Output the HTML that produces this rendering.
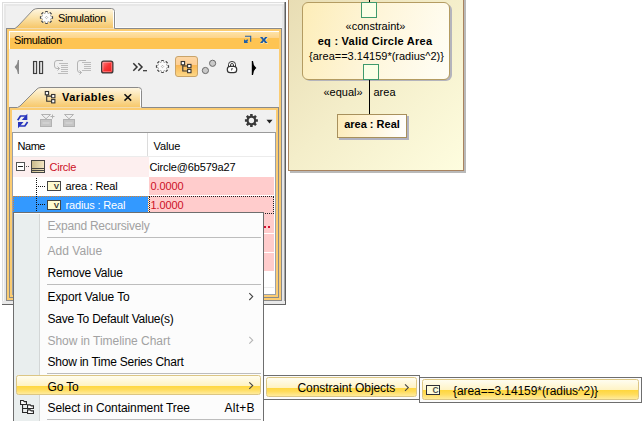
<!DOCTYPE html>
<html lang="en">
<head>
<meta charset="utf-8">
<title>Simulation</title>
<style>
html,body{margin:0;padding:0;background:#fff;}
body{width:644px;height:421px;position:relative;overflow:hidden;font-family:"Liberation Sans",sans-serif;font-size:11px;color:#000;}
.a{position:absolute;}
.t{position:absolute;white-space:nowrap;line-height:14px;height:14px;}
.m{position:absolute;white-space:nowrap;line-height:16px;height:16px;font-size:12px;letter-spacing:-0.3px;color:#000;}
.dis{color:#a2a2a2;}
.sep{position:absolute;height:1px;background:#bdbdbd;left:47px;width:214px;}
.hl{position:absolute;border:1px solid #dcc684;border-radius:2.5px;box-sizing:border-box;
 background:linear-gradient(#fffdf0 0%,#fff3c4 53%,#ffd63c 53%,#ffdc5c 75%,#ffeb9c 100%);}
svg{position:absolute;overflow:visible;}
</style>
</head>
<body>

<!-- ================= application background ================= -->
<div class="a" style="left:2px;top:2px;width:284px;height:303px;background:#f0f0f0;"></div>
<div class="a" style="left:2px;top:2px;width:284px;height:1px;background:#dedede;"></div>
<div class="a" style="left:2px;top:3px;width:284px;height:1px;background:#fafafa;"></div>
<div class="a" style="left:4px;top:4px;width:281px;height:2px;background:#e7e7e7;"></div>
<div class="a" style="left:2px;top:2px;width:1px;height:303px;background:#dedede;"></div>
<div class="a" style="left:3px;top:3px;width:1px;height:301px;background:#fafafa;"></div>
<div class="a" style="left:4px;top:4px;width:2px;height:300px;background:#e7e7e7;"></div>
<div class="a" style="left:282px;top:4px;width:2px;height:300px;background:#e6e6e6;"></div>
<div class="a" style="left:284px;top:2px;width:1px;height:302px;background:#a4a4a4;"></div>
<div class="a" style="left:285px;top:2px;width:1px;height:303px;background:#5e5e5e;"></div>
<div class="a" style="left:2px;top:301px;width:283px;height:3px;background:#e9e9e9;"></div>
<div class="a" style="left:2px;top:304px;width:284px;height:1px;background:#666;"></div>

<!-- ================= Simulation tab ================= -->
<svg style="left:0;top:0;" width="130" height="32" viewBox="0 0 130 32">
 <defs>
  <linearGradient id="tabg" x1="0" y1="0" x2="0" y2="1">
   <stop offset="0" stop-color="#fef6e2"/><stop offset="0.45" stop-color="#fbe3ab"/><stop offset="1" stop-color="#f6c566"/>
  </linearGradient>
 </defs>
 <path d="M14.5 28.5 L18 26 L33 10 Q35 8.5 38 8.5 L111 8.5 Q113.5 8.5 113.5 11 L113.5 28.5 Z" fill="url(#tabg)"/>
 <path d="M7 28.5 L15 28.5 L18 26 L33 10 Q35 8.5 38 8.5 L111.5 8.5 Q114.5 8.5 114.5 11.5 L114.5 28.5 L282 28.5" fill="none" stroke="#8a8a8a" stroke-width="1"/>
 <path d="M113.5 10.5 L113.5 27.5" stroke="#ffffff" stroke-width="1" fill="none"/>
 <path d="M115.5 11 L115.5 27.5 L130 27.5" stroke="#fbfbfb" stroke-width="1" fill="none"/>
 <!-- gear -->
 <g transform="translate(46.5,17.5)">
  <path d="M-1.01 -4.38 L-1.06 -6.01 L1.06 -6.01 L1.01 -4.38 L2.38 -3.82 L3.50 -5.00 L5.00 -3.50 L3.82 -2.38 L4.38 -1.01 L6.01 -1.06 L6.01 1.06 L4.38 1.01 L3.82 2.38 L5.00 3.50 L3.50 5.00 L2.38 3.82 L1.01 4.38 L1.06 6.01 L-1.06 6.01 L-1.01 4.38 L-2.38 3.82 L-3.50 5.00 L-5.00 3.50 L-3.82 2.38 L-4.38 1.01 L-6.01 1.06 L-6.01 -1.06 L-4.38 -1.01 L-3.82 -2.38 L-5.00 -3.50 L-3.50 -5.00 L-2.38 -3.82 Z" fill="#fdfdfd" stroke="#9a9a9a" stroke-width="0.7"/>
  <path d="M-1.16 -5.99 L1.16 -5.99 M3.41 -5.06 L5.06 -3.41 M5.99 -1.16 L5.99 1.16 M5.06 3.41 L3.41 5.06 M1.16 5.99 L-1.16 5.99 M-3.41 5.06 L-5.06 3.41 M-5.99 1.16 L-5.99 -1.16 M-5.06 -3.41 L-3.41 -5.06" fill="none" stroke="#474747" stroke-width="1.2"/>
  <path d="M-1.2 0 L0 -1.2 L1.2 0 L0 1.2 Z" fill="#fff" stroke="#8a8a8a" stroke-width="0.6"/>
 </g>
</svg>
<div class="a" style="left:115px;top:28px;width:167px;height:1px;background:#8a8a8a;"></div>
<div class="a" style="left:115px;top:27px;width:167px;height:1px;background:#fbfbfb;"></div>
<div class="t" style="left:58px;top:11px;letter-spacing:-0.36px;">Simulation</div>

<!-- ================= outer panel ================= -->
<div class="a" style="left:6px;top:28px;width:1px;height:273px;background:#8a8a8a;"></div>
<div class="a" style="left:281px;top:28px;width:1px;height:273px;background:#8a8a8a;"></div>
<div class="a" style="left:6px;top:300px;width:276px;height:1px;background:#8a8a8a;"></div>
<div class="a" style="left:7px;top:29px;width:274px;height:271px;box-sizing:border-box;border:2px solid #fbcc72;"></div>
<!-- title bar -->
<div class="a" style="left:9px;top:31px;width:270px;height:18px;background:#fff;"></div>
<div class="a" style="left:10px;top:32px;width:269px;height:17px;background:linear-gradient(#fee3a6 0px,#fdd48a 6px,#fec453 6px,#fec453 17px);"></div>
<div class="t" style="left:14px;top:33px;letter-spacing:-0.36px;">Simulation</div>
<!-- title icons -->
<svg style="left:243px;top:34px;" width="28" height="11" viewBox="243 34 28 11">
 <path d="M245 36.2 L250.7 36.2 L250.7 41.8" fill="none" stroke="#2160a8" stroke-width="1.1"/>
 <path d="M244 39.2 L244 43 L248 43 L247.2 41.6 L248.2 40 L247.2 39.2 L245.8 40.4 Z" fill="#2160a8"/>
 <path d="M260 37 L262.5 37 L263.8 38.7 L265.1 37 L267.6 37 L265.1 40 L267.6 43 L265.1 43 L263.8 41.3 L262.5 43 L260 43 L262.5 40 Z" fill="#fff3d4" transform="translate(0.6,0.4)"/>
 <path d="M260 37 L262.5 37 L263.8 38.7 L265.1 37 L267.6 37 L265.1 40 L267.6 43 L265.1 43 L263.8 41.3 L262.5 43 L260 43 L262.5 40 Z" fill="#1c5aa2"/>
</svg>

<!-- ================= main toolbar ================= -->
<svg style="left:0;top:54px;" width="282" height="30" viewBox="0 54 282 30">
 <defs>
  <linearGradient id="pg" x1="0" y1="0" x2="1" y2="0"><stop offset="0" stop-color="#b9b9b9"/><stop offset="1" stop-color="#f4f4f4"/></linearGradient>
  <linearGradient id="rg" x1="0" y1="0" x2="1" y2="1"><stop offset="0" stop-color="#ff8585"/><stop offset="0.5" stop-color="#f73535"/><stop offset="1" stop-color="#ee1818"/></linearGradient>
  <linearGradient id="bg1" x1="0" y1="0" x2="0" y2="1"><stop offset="0" stop-color="#fdd7a6"/><stop offset="0.42" stop-color="#fdcf95"/><stop offset="0.43" stop-color="#f9b653"/><stop offset="1" stop-color="#fdd989"/></linearGradient>
 </defs>
 <!-- left arrow -->
 <path d="M14.6 67 Q17.6 64.5 17.9 60 L19 60 L19 74 L17.9 74 Q17.6 69.5 14.6 67 Z" fill="#8a8a8a"/>
 <!-- pause -->
 <rect x="33.5" y="61.5" width="3.1" height="12" fill="url(#pg)" stroke="#3c3c3c" stroke-width="1.1"/>
 <rect x="39.5" y="61.5" width="3.1" height="12" fill="url(#pg)" stroke="#3c3c3c" stroke-width="1.1"/>
 <!-- step into (disabled) -->
 <g stroke="#b4b4b4" stroke-width="1" fill="none">
  <path d="M63 60.5 L57 60.5 Q54.5 60.5 54.5 63 L54.5 66 Q54.5 68.5 57 68.5 L59.5 68.5 M57.5 66.5 L59.5 68.5 L57.5 70.5"/>
  <path d="M59 63.5 L68 63.5 M61 65.5 L68 65.5 M61 67.5 L68 67.5 M61 69.5 L68 69.5 M61 71.5 L68 71.5 M58 73.5 L68 73.5" stroke="#bcbcbc"/>
 </g>
 <!-- step over (disabled) -->
 <g stroke="#b4b4b4" stroke-width="1" fill="none">
  <path d="M86 60.5 L80 60.5 Q77.5 60.5 77.5 63 L77.5 70 Q77.5 72.5 80 72.5 L81.5 72.5 M79.5 70.5 L81.5 72.5 L79.5 74.5"/>
  <path d="M82 62.5 L91 62.5 M84 64.5 L91 64.5 M84 66.5 L91 66.5 M84 68.5 L91 68.5 M82 70.5 L91 70.5" stroke="#bcbcbc"/>
 </g>
 <!-- stop -->
 <rect x="101.6" y="61.1" width="11.3" height="11.8" rx="2" fill="url(#rg)" stroke="#3a3a3a" stroke-width="1.2"/>
 <rect x="102.9" y="62.4" width="8.7" height="9.2" rx="1" fill="none" stroke="#ffffff" stroke-opacity="0.33" stroke-width="1"/>
 <!-- >>_ -->
 <path d="M133.3 63.3 L137 67 L133.3 70.7 M138.3 63.3 L142 67 L138.3 70.7" fill="none" stroke="#333" stroke-width="1.5"/>
 <path d="M143 70.7 L147 70.7" stroke="#333" stroke-width="1.2"/>
 <!-- dotted gear -->
 <g transform="translate(162.5,66.5)">
  <path d="M-1.01 -4.38 L-1.06 -6.01 L1.06 -6.01 L1.01 -4.38 L2.38 -3.82 L3.50 -5.00 L5.00 -3.50 L3.82 -2.38 L4.38 -1.01 L6.01 -1.06 L6.01 1.06 L4.38 1.01 L3.82 2.38 L5.00 3.50 L3.50 5.00 L2.38 3.82 L1.01 4.38 L1.06 6.01 L-1.06 6.01 L-1.01 4.38 L-2.38 3.82 L-3.50 5.00 L-5.00 3.50 L-3.82 2.38 L-4.38 1.01 L-6.01 1.06 L-6.01 -1.06 L-4.38 -1.01 L-3.82 -2.38 L-5.00 -3.50 L-3.50 -5.00 L-2.38 -3.82 Z" fill="#fdfdfd" stroke="#9a9a9a" stroke-width="0.7"/>
  <path d="M-1.16 -5.99 L1.16 -5.99 M3.41 -5.06 L5.06 -3.41 M5.99 -1.16 L5.99 1.16 M5.06 3.41 L3.41 5.06 M1.16 5.99 L-1.16 5.99 M-3.41 5.06 L-5.06 3.41 M-5.99 1.16 L-5.99 -1.16 M-5.06 -3.41 L-3.41 -5.06" fill="none" stroke="#474747" stroke-width="1.2"/>
  <path d="M-1.2 0 L0 -1.2 L1.2 0 L0 1.2 Z" fill="#fff" stroke="#8a8a8a" stroke-width="0.6"/>
 </g>
 <!-- selected button -->
 <rect x="175.5" y="56.5" width="22" height="20" rx="2.5" fill="url(#bg1)" stroke="#c9a46a" stroke-width="1"/>
 <g fill="#fff" stroke="#333" stroke-width="1.1">
  <path d="M182.8 65 L182.8 71 L187.5 71 M182.8 66 L187.5 66" fill="none"/>
  <rect x="181.2" y="61.5" width="3.4" height="3.3"/>
  <rect x="187.6" y="64.4" width="3.4" height="3.3"/>
  <rect x="187.6" y="69.4" width="3.4" height="3.3"/>
 </g>
 <!-- two circles -->
 <circle cx="205.4" cy="70.5" r="3.1" fill="#c9c9c9" stroke="#6a6a6a" stroke-width="1"/>
 <circle cx="212.6" cy="63.3" r="3.1" fill="#c9c9c9" stroke="#6a6a6a" stroke-width="1"/>
 <!-- lock -->
 <path d="M228.5 67.5 L228.5 64.5 Q228.5 61.5 232 61.5 Q235.5 61.5 235.5 64.5 L235.5 67.5 Z" fill="#fff" stroke="#333" stroke-width="1"/>
 <path d="M230.5 67 L230.5 64.6 Q230.5 63.6 232 63.6 Q233.5 63.6 233.5 64.6 L233.5 67 Z" fill="#f0f0f0" stroke="#333" stroke-width="1"/>
 <rect x="227.3" y="66.4" width="9.4" height="6.2" rx="2.9" fill="#fff" stroke="#333" stroke-width="1.2"/>
 <path d="M231.4 68.2 L233 68.2 L232.4 69.2 L231.8 70.4 L231.2 70.4 Z" fill="#333"/>
 <!-- right arrow -->
 <path d="M251.8 61 L253 61 Q253.2 65.5 256.4 68 Q253.2 70.5 253 75 L251.8 75 Z" fill="#000"/>
</svg>

<!-- ================= Variables tab ================= -->
<svg style="left:0;top:84px;" width="282" height="28" viewBox="0 84 282 28">
 <defs>
  <linearGradient id="tabg2" x1="0" y1="0" x2="0" y2="1">
   <stop offset="0" stop-color="#fef6e2"/><stop offset="0.45" stop-color="#fbe3ab"/><stop offset="1" stop-color="#f7c768"/>
  </linearGradient>
 </defs>
 <path d="M17.5 107.5 L20 106 L37 89 Q38.5 87.5 41 87.5 L138 87.5 Q140.5 87.5 140.5 90 L140.5 107.5 Z" fill="url(#tabg2)"/>
 <path d="M9.5 107.5 L17.5 107.5 L20 106 L37 89 Q38.5 87.5 41 87.5 L138.5 87.5 Q141.5 87.5 141.5 90.5 L141.5 107.5 L279 107.5" fill="none" stroke="#8a8a8a" stroke-width="1"/>
 <path d="M140.5 89.5 L140.5 106.5" stroke="#fff" stroke-width="1"/>
 <g fill="#fff" stroke="#333" stroke-width="1.1">
  <path d="M46.7 95 L46.7 101.3 L51.5 101.3 M46.7 96.1 L51.5 96.1" fill="none"/>
  <rect x="45.3" y="91.5" width="3.3" height="3.3"/>
  <rect x="51.6" y="94.5" width="3.3" height="3.3"/>
  <rect x="51.6" y="99.6" width="3.3" height="3.3"/>
 </g>
 <path d="M124.5 94.2 L131.2 100.6 M131.2 94.2 L124.5 100.6" stroke="#111" stroke-width="1.5" fill="none"/>
</svg>
<div class="t" style="left:62px;top:90px;font-weight:bold;letter-spacing:0.5px;">Variables</div>

<!-- ================= inner panel ================= -->
<div class="a" style="left:9px;top:107px;width:1px;height:191px;background:#8a8a8a;"></div>
<div class="a" style="left:278px;top:107px;width:1px;height:191px;background:#8a8a8a;"></div>
<div class="a" style="left:9px;top:297px;width:270px;height:1px;background:#8a8a8a;"></div>
<div class="a" style="left:10px;top:108px;width:268px;height:189px;box-sizing:border-box;border:2px solid #fbcc72;"></div>

<!-- inner toolbar icons -->
<svg style="left:12px;top:110px;" width="264" height="22" viewBox="12 110 264 22">
 <!-- refresh -->
 <g fill="none" stroke="#2735bd" stroke-width="1.7" stroke-linejoin="round">
  <path d="M17.7 120.2 L20.5 116 L26 116"/>
  <path d="M27.6 122 L24.8 126 L19.3 126"/>
 </g>
 <path d="M27.3 113.7 L27.3 120 L21.8 120 Z" fill="#2735bd"/>
 <path d="M18 128.3 L18 122 L23.5 122 Z" fill="#2735bd"/>
 <!-- disabled icons -->
 <g fill="#c6c6c6" stroke="#b2b2b2" stroke-width="1">
  <rect x="40.5" y="119.5" width="11" height="7"/>
  <path d="M41.5 114.5 L50.5 114.5 L46 118.8 Z" fill="#f0f0f0"/>
  <path d="M50.5 116.5 L54.5 116.5 M52.5 114.5 L52.5 118.5" fill="none"/>
  <rect x="63.5" y="119.5" width="11" height="7"/>
  <path d="M64.5 114.5 L73.5 114.5 L69 118.8 Z" fill="#f0f0f0"/>
 </g>
 <path d="M42.5 123 L49.5 123 M65.5 123 L72.5 123" stroke="#dcdcdc" stroke-width="1"/>
 <!-- gear -->
 <g transform="translate(251.4,120.5)">
  <path fill-rule="evenodd" d="M-1.27 -4.73 L-1.26 -6.48 L1.26 -6.48 L1.27 -4.73 L2.45 -4.24 L3.69 -5.47 L5.47 -3.69 L4.24 -2.45 L4.73 -1.27 L6.48 -1.26 L6.48 1.26 L4.73 1.27 L4.24 2.45 L5.47 3.69 L3.69 5.47 L2.45 4.24 L1.27 4.73 L1.26 6.48 L-1.26 6.48 L-1.27 4.73 L-2.45 4.24 L-3.69 5.47 L-5.47 3.69 L-4.24 2.45 L-4.73 1.27 L-6.48 1.26 L-6.48 -1.26 L-4.73 -1.27 L-4.24 -2.45 L-5.47 -3.69 L-3.69 -5.47 L-2.45 -4.24 Z M2.7 0 A2.7 2.7 0 1 0 -2.7 0 A2.7 2.7 0 1 0 2.7 0 Z" fill="#383838"/>
  </g>
 <path d="M266.5 119.7 L272.5 119.7 L269.5 123.4 Z" fill="#222"/>
</svg>

<!-- ================= table ================= -->
<div class="a" style="left:12px;top:132px;width:264px;height:163px;background:#fff;box-sizing:border-box;border:1px solid #9aa0aa;border-top-color:#9a9a9a;"></div>
<!-- header -->
<div class="a" style="left:147px;top:133px;width:1px;height:24px;background:#dcdcdc;"></div>
<div class="a" style="left:13px;top:156px;width:262px;height:1px;background:#ececec;"></div>
<div class="t" style="left:17.5px;top:139px;letter-spacing:-0.45px;">Name</div>
<div class="t" style="left:153.5px;top:139px;letter-spacing:-0.1px;">Value</div>
<!-- rows -->
<div class="a" style="left:13px;top:157px;width:136px;height:20px;background:#fdefef;"></div>
<div class="a" style="left:149px;top:177px;width:125px;height:18px;background:#ffcccc;"></div>
<div class="a" style="left:13px;top:196px;width:135px;height:18px;background:#3399ff;"></div>
<div class="a" style="left:149px;top:196px;width:125px;height:18px;background:#ffcccc;"></div>
<div class="a" style="left:149px;top:214px;width:125px;height:19px;background:#ffcccc;"></div>
<div class="a" style="left:149px;top:234px;width:125px;height:18px;background:#ffcccc;"></div>
<div class="a" style="left:149px;top:253px;width:125px;height:18px;background:#ffcccc;"></div>
<div class="a" style="left:149px;top:287px;width:125px;height:1px;background:#ececec;"></div>
<!-- selection dotted borders -->
<div class="a" style="left:13px;top:196px;width:136px;height:0;border-top:1px dotted #d9822b;"></div>
<div class="a" style="left:13px;top:196px;width:0;height:17px;border-left:1px dotted #d9822b;"></div>
<div class="a" style="left:148px;top:196px;width:0;height:17px;border-left:1px dotted #d9822b;"></div>
<div class="a" style="left:149px;top:196px;width:125px;height:18px;box-sizing:border-box;border:1px dotted #222;"></div>
<div class="a" style="left:264px;top:226px;width:1.5px;height:2px;background:#d01030;"></div>
<div class="a" style="left:268px;top:226px;width:1.5px;height:2px;background:#d01030;"></div>

<!-- tree graphics -->
<svg style="left:13px;top:157px;" width="136" height="57" viewBox="13 157 136 57" shape-rendering="crispEdges">
 <defs>
  <linearGradient id="blk" x1="0" y1="0" x2="1" y2="0"><stop offset="0" stop-color="#c9b98a"/><stop offset="1" stop-color="#f3e8c4"/></linearGradient>
 </defs>
 <rect x="16.5" y="162.5" width="8" height="8" fill="#fff" stroke="#555" stroke-width="1"/>
 <path d="M18 166.5 L23 166.5" stroke="#222" stroke-width="1"/>
 <path d="M26 166.5 L29 166.5" stroke="#555" stroke-width="1" stroke-dasharray="1 1"/>
 <rect x="31.5" y="160.5" width="13" height="12" fill="url(#blk)" stroke="#444" stroke-width="1"/>
 <path d="M32 168.5 L44 168.5 M32 170.5 L44 170.5" stroke="#444" stroke-width="1"/>
 <path d="M36.5 178 L36.5 211" stroke="#111" stroke-width="1" stroke-dasharray="1 1"/>
 <path d="M38 186.5 L46 186.5 M38 204.5 L46 204.5" stroke="#111" stroke-width="1" stroke-dasharray="1 1"/>
 <rect x="47.5" y="181.5" width="13" height="9" fill="#fffbd0" stroke="#444" stroke-width="1"/>
 <rect x="47.5" y="200.5" width="13" height="9" fill="#fffbd0" stroke="#444" stroke-width="1"/>
</svg>
<div class="a" style="left:53.8px;top:182px;width:6px;height:10px;font-size:8px;line-height:10px;font-weight:bold;color:#333;">V</div>
<div class="a" style="left:53.8px;top:201px;width:6px;height:10px;font-size:8px;line-height:10px;font-weight:bold;color:#333;">V</div>

<div class="t" style="left:49.5px;top:160px;color:#cc1126;letter-spacing:-0.25px;">Circle</div>
<div class="t" style="left:149.5px;top:160px;letter-spacing:-0.15px;">Circle@6b579a27</div>
<div class="t" style="left:65.5px;top:179px;letter-spacing:-0.16px;">area : Real</div>
<div class="t" style="left:150.5px;top:179px;color:#cc1126;letter-spacing:-0.1px;">0.0000</div>
<div class="t" style="left:65.5px;top:198px;color:#fff;letter-spacing:-0.16px;">radius : Real</div>
<div class="t" style="left:150.5px;top:198px;color:#cc1126;letter-spacing:-0.1px;">1.0000</div>

<!-- ================= diagram ================= -->
<div class="a" style="left:290px;top:0;width:176px;height:173px;background:#b9b9b9;"></div>
<div class="a" style="left:288px;top:-1px;width:176px;height:172px;box-sizing:border-box;border:1px solid #a9835f;background:linear-gradient(135deg,#e8ddb4 0%,#f4eeca 48%,#fefddf 100%);"></div>
<!-- constraint block -->
<div class="a" style="left:304px;top:4px;width:148px;height:77px;border-radius:6px;background:#b4b4bc;"></div>
<div class="a" style="left:302px;top:2px;width:148px;height:78px;box-sizing:border-box;border:1px solid #b49c62;border-radius:6px;background:linear-gradient(108deg,#fdedb8 0%,#fef5d8 45%,#fffef6 100%);"></div>
<div class="a" style="left:369px;top:0;width:1px;height:3px;background:#000;"></div>
<div class="a" style="left:361px;top:2px;width:16px;height:16px;box-sizing:border-box;border:1px solid #3f9a6c;background:#fbffe6;"></div>
<div class="a" style="left:363px;top:64px;width:16px;height:16px;box-sizing:border-box;border:1px solid #3f9a6c;background:#fbffe6;"></div>
<div class="a" style="left:369px;top:80px;width:1px;height:34px;background:#000;"></div>
<div class="t" style="left:301px;width:149px;text-align:center;top:19px;">«constraint»</div>
<div class="t" style="left:300.5px;width:149px;text-align:center;top:34px;font-weight:bold;letter-spacing:0.25px;">eq : Valid Circle Area</div>
<div class="t" style="left:302px;width:149px;text-align:center;top:49px;">{area==3.14159*(radius^2)}</div>
<div class="t" style="left:323.5px;top:85px;">«equal»</div>
<div class="t" style="left:373.5px;top:85px;">area</div>
<!-- area : Real -->
<div class="a" style="left:339px;top:116px;width:70px;height:24px;background:#b2b2c0;"></div>
<div class="a" style="left:337px;top:114px;width:70px;height:24px;box-sizing:border-box;border:1px solid #a8905c;background:linear-gradient(100deg,#fdecba 0%,#fff5da 50%,#ffffff 100%);"></div>
<div class="t" style="left:337px;width:70px;text-align:center;top:117px;font-weight:bold;">area : Real</div>

<!-- ================= context menu ================= -->
<div class="a" style="left:13px;top:212px;width:251px;height:215px;box-sizing:border-box;border:1px solid #6e6e6e;background:#fcfcfc;"></div>
<div class="a" style="left:14px;top:214px;width:25px;height:210px;background:#e9eeee;"></div>
<div class="a" style="left:39px;top:214px;width:1px;height:210px;background:#d3d6d6;"></div>

<div class="m dis" style="left:47.5px;top:218px;letter-spacing:-0.23px;">Expand Recursively</div>
<div class="sep" style="top:237px;"></div>
<div class="m dis" style="left:47.5px;top:243px;letter-spacing:0.03px;">Add Value</div>
<div class="m" style="left:47.5px;top:265px;letter-spacing:-0.22px;">Remove Value</div>
<div class="sep" style="top:284px;"></div>
<div class="m" style="left:47.5px;top:289px;letter-spacing:-0.10px;">Export Value To</div>
<div class="m" style="left:47.5px;top:311px;letter-spacing:-0.23px;">Save To Default Value(s)</div>
<div class="m dis" style="left:47.5px;top:333px;letter-spacing:-0.03px;">Show in Timeline Chart</div>
<div class="m" style="left:47.5px;top:354px;letter-spacing:-0.24px;">Show in Time Series Chart</div>
<div class="sep" style="top:373px;"></div>
<div class="hl" style="left:16px;top:375px;width:245px;height:20px;"></div>
<div class="m" style="left:47.5px;top:379px;letter-spacing:-0.15px;">Go To</div>
<div class="m" style="left:47.5px;top:400px;letter-spacing:-0.09px;">Select in Containment Tree</div>
<div class="m" style="left:224.5px;top:400px;letter-spacing:0.27px;">Alt+B</div>
<div class="sep" style="top:419px;"></div>
<svg style="left:240px;top:286px;" width="20" height="110" viewBox="240 286 20 110">
 <path d="M249.3 293.2 L252.7 296.6 L249.3 300" fill="none" stroke="#444" stroke-width="1.1"/>
 <path d="M249.3 336.8 L252.7 340.2 L249.3 343.6" fill="none" stroke="#b5b5b5" stroke-width="1.1"/>
 <path d="M249.3 382.3 L252.7 385.6 L249.3 388.9" fill="none" stroke="#444" stroke-width="1.1"/>
</svg>
<!-- containment icon -->
<svg style="left:18px;top:399px;" width="18" height="16" viewBox="18 399 18 16">
 <g fill="#fff" stroke="#2a2a2a" stroke-width="1.1" stroke-linejoin="miter">
  <path d="M22.55 404 L22.55 412.55 L27.5 412.55 M22.55 408.45 L27.5 408.45" fill="none"/>
  <path d="M20.55 404.45 L20.55 400.55 L23.3 400.55 L24.3 401.6 L26.45 401.6 L26.45 404.45 Z"/>
  <path d="M27.55 408.45 L27.55 404.9 L30.2 404.9 L31.2 405.9 L33.45 405.9 L33.45 408.45 Z"/>
  <path d="M27.55 413.45 L27.55 409.9 L30.2 409.9 L31.2 410.9 L33.45 410.9 L33.45 413.45 Z"/>
 </g>
</svg>

<!-- submenu 1 -->
<div class="a" style="left:263px;top:375px;width:157px;height:25px;box-sizing:border-box;border:1px solid #6e6e6e;background:#fcfcfc;"></div>
<div class="hl" style="left:266px;top:377px;width:151px;height:20px;"></div>
<div class="m" style="left:297.5px;top:380px;letter-spacing:-0.05px;">Constraint Objects</div>
<svg style="left:400px;top:380px;" width="14" height="14" viewBox="400 380 14 14">
 <path d="M405 384.4 L408.3 387.6 L405 390.8" fill="none" stroke="#444" stroke-width="1.1"/>
</svg>

<!-- submenu 2 -->
<div class="a" style="left:419px;top:377px;width:223px;height:26px;box-sizing:border-box;border:1px solid #6e6e6e;background:#fcfcfc;"></div>
<div class="hl" style="left:422px;top:379px;width:217px;height:21px;"></div>
<div class="a" style="left:426px;top:385px;width:14px;height:10px;box-sizing:border-box;border:1px solid #2e2e38;background:#fffcda;"></div>
<div class="a" style="left:432.5px;top:385px;width:7px;height:10px;font-size:8.5px;line-height:10px;font-weight:bold;color:#505050;">C</div>
<div class="m" style="left:453px;top:383px;letter-spacing:-0.08px;">{area==3.14159*(radius^2)}</div>

</body>
</html>
